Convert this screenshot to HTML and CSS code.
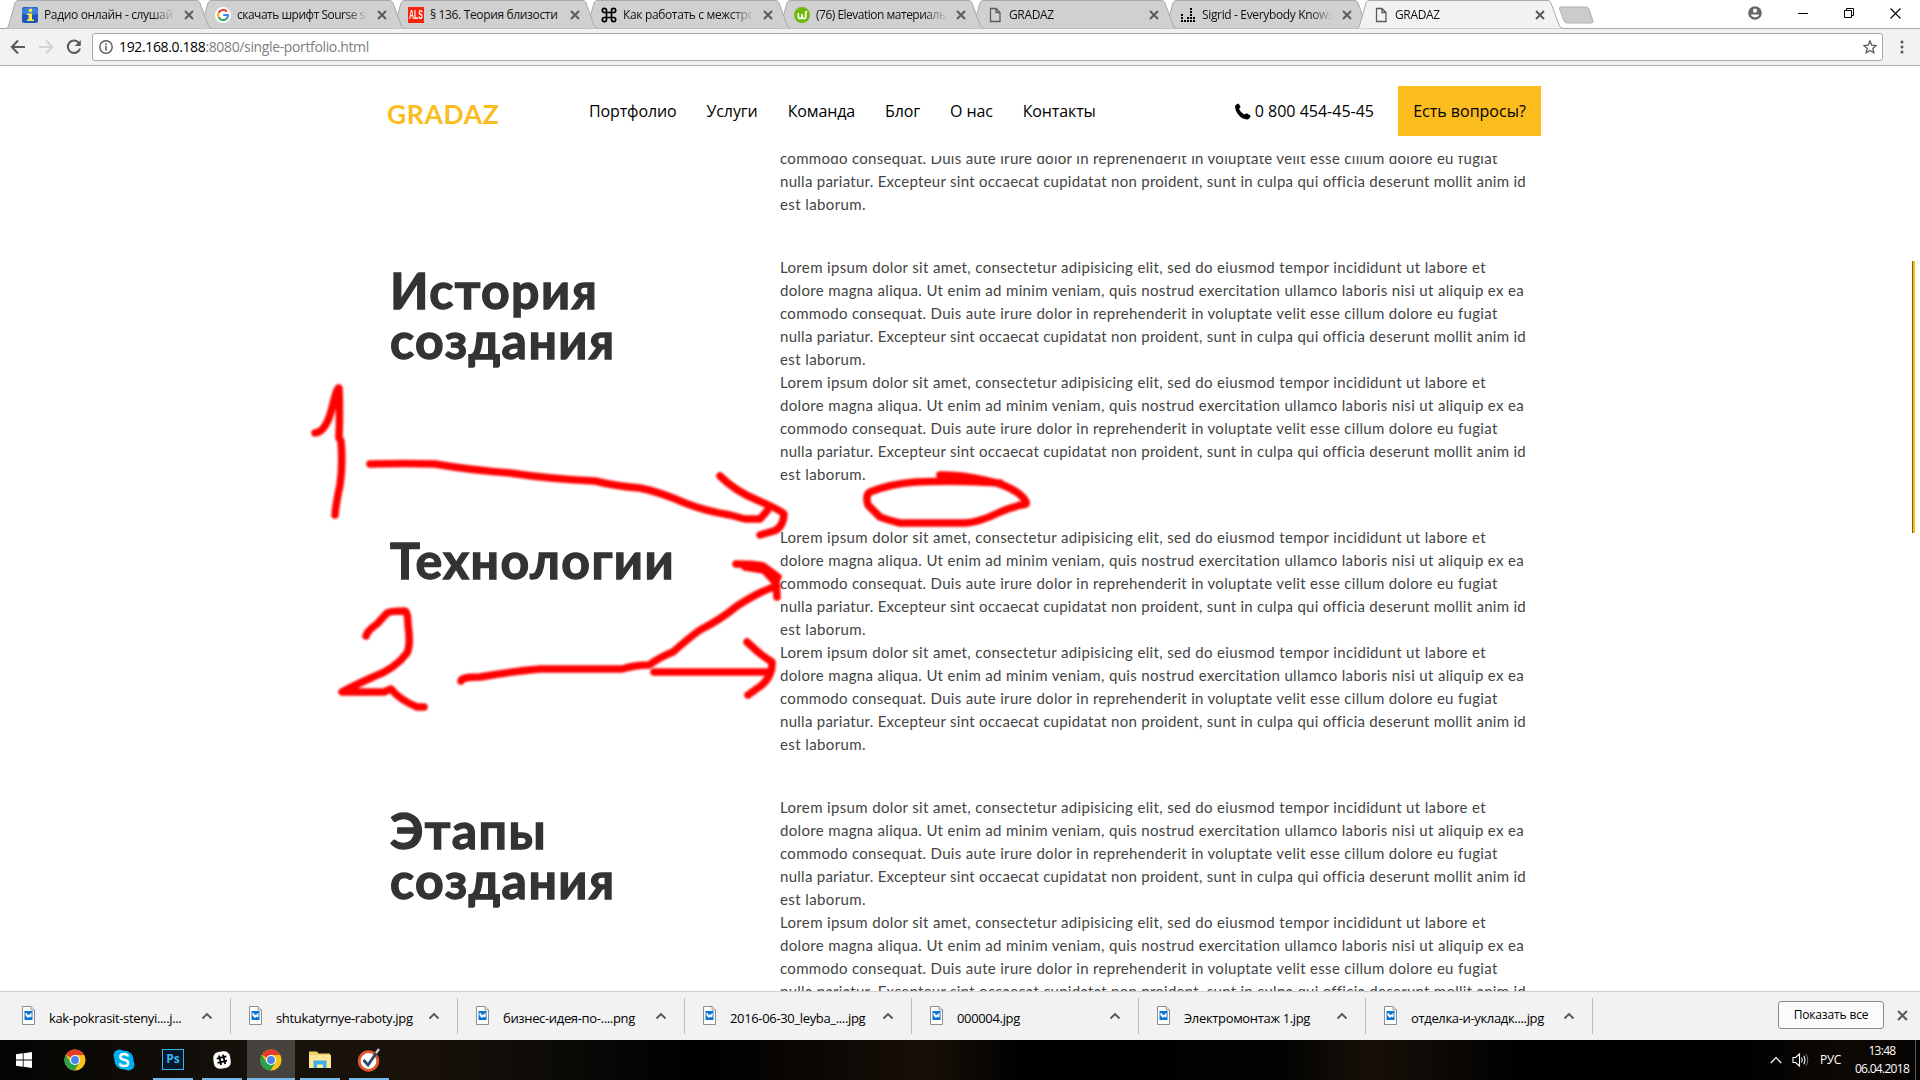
FILE: index.html
```
<!DOCTYPE html>
<html lang="ru">
<head>
<meta charset="utf-8">
<title>GRADAZ</title>
<link rel="stylesheet" href="styles.css">
</head>
<body>
<svg class="defs" width="0" height="0" aria-hidden="true">
  <symbol id="x" viewBox="0 0 10 10"><path d="M1 1l8 8M9 1l-8 8" fill="none" stroke="#5a5a5a" stroke-width="1.9"/></symbol>
  <symbol id="tab" viewBox="0 0 206 29"><path d="M0 28.5 C2 28 2 27 3 24 L9 3 Q10 .5 12 .5 H191 Q193 .5 194 3 L202 25 Q203 28 206 28.5" fill="currentColor" stroke="#a9a9a9"/></symbol>
  <symbol id="page" viewBox="0 0 16 16"><path d="M3.5 1.5h5.5l4 4v9H3.5zM9 1.5v4h4" fill="none" stroke="#5a5a5a" stroke-width="1.3"/></symbol>
  <symbol id="chev" viewBox="0 0 12 8"><path d="M1.5 6.5L6 2l4.500 4.500" fill="none" stroke="#555" stroke-width="1.9"/></symbol>
  <symbol id="file" viewBox="0 0 13 19"><path d="M.5.500h8.500l3.500 3.500v14.500H.5z" fill="#fff" stroke="#8d8d8d"/><path d="M9 .5v3.500h3.500" fill="#ddd" stroke="#8d8d8d" stroke-width=".8"/><path d="M2.500 5h8v9h-8z" fill="#0b74d1"/><path d="M3.500 7h1.200l1.300 2.500 1-1.500 1 1 .8-2h.8v3.500l-1 1-1.200-1-1.400 1.500-2.500-2.500z" fill="#fff"/></symbol>
  <symbol id="chrome" viewBox="0 0 24 24"><circle cx="12" cy="12" r="11.500" fill="#fbc116"/><path d="M12 12L2 6.200A11.500 11.500 0 0 1 22 6.500H12z" fill="#e33b2e"/><path d="M2 6.200A11.500 11.500 0 0 0 11.500 23.500L16.800 14.700 7.200 14.700z" fill="#2aa24c"/><circle cx="12" cy="12" r="5.500" fill="#fff"/><circle cx="12" cy="12" r="4.300" fill="#4a84ee"/></symbol>
</svg>

<div class="tabstrip">
  <div class="tab"><svg class="shape"><use href="#tab"/></svg>
    <svg class="fav" viewBox="0 0 16 16"><rect width="16" height="16" rx="2" fill="#1d55b8"/><path d="M0 2q8-4 16 0v5q-8 2-16 0z" fill="#3c7fd8"/><circle cx="8.500" cy="3.400" r="1.800" fill="#ffe642"/><path d="M5 6.500h5v6h2V14H5v-1.500h1.500V8H5z" fill="#ffe642"/></svg>
    <span class="label">Радио онлайн - слушай</span><svg class="close"><use href="#x"/></svg></div>
  <div class="tab"><svg class="shape"><use href="#tab"/></svg>
    <svg class="fav" viewBox="0 0 16 16"><circle cx="8" cy="8" r="8" fill="#fff"/><g fill="none" stroke-width="2.200"><path d="M11.800 4.500A5 5 0 0 0 3.700 5.700" stroke="#ea4335"/><path d="M3.700 5.700a5 5 0 0 0 0 4.600" stroke="#fbbc05"/><path d="M3.700 10.300a5 5 0 0 0 7.900 1.400" stroke="#34a853"/><path d="M11.600 11.700A5 5 0 0 0 13 8H8.200" stroke="#4285f4"/></g></svg>
    <span class="label tight">скачать шрифт Sourse s</span><svg class="close"><use href="#x"/></svg></div>
  <div class="tab"><svg class="shape"><use href="#tab"/></svg>
    <span class="fav als"><b>ALS</b></span>
    <span class="label">§ 136. Теория близости</span><svg class="close"><use href="#x"/></svg></div>
  <div class="tab"><svg class="shape"><use href="#tab"/></svg>
    <svg class="fav" viewBox="0 0 16 16"><path d="M5.500 5.500h5v5h-5zM5.500 5.500H3.400A2.100 2.100 0 1 1 5.500 3.400zM10.500 5.500V3.400a2.100 2.100 0 1 1 2.100 2.100zM10.500 10.500h2.100a2.100 2.100 0 1 1-2.100 2.100zM5.500 10.500v2.100a2.100 2.100 0 1 1-2.100-2.100z" fill="none" stroke="#000" stroke-width="1.700"/></svg>
    <span class="label">Как работать с межстро</span><svg class="close"><use href="#x"/></svg></div>
  <div class="tab"><svg class="shape"><use href="#tab"/></svg>
    <svg class="fav" viewBox="0 0 16 16"><circle cx="8" cy="8" r="8" fill="#6fb90a"/><path d="M4.300 6v3.500q0 2 1.800 2t1.900-2V7v2.500q0 2 1.800 2t1.900-2V5.500l1-1.500" fill="none" stroke="#fff" stroke-width="1.700"/></svg>
    <span class="label tight">(76) Elevation материаль</span><svg class="close"><use href="#x"/></svg></div>
  <div class="tab"><svg class="shape"><use href="#tab"/></svg>
    <svg class="fav"><use href="#page"/></svg>
    <span class="label">GRADAZ</span><svg class="close"><use href="#x"/></svg></div>
  <div class="tab"><svg class="shape"><use href="#tab"/></svg>
    <svg class="fav" viewBox="0 0 16 16"><g fill="none" stroke="#000" stroke-width="2" stroke-dasharray="2 1"><path d="M2 15V6M5 15v-3M8 15V9M11 15V1M14 15V9"/></g></svg>
    <span class="label sigrid">Sigrid - Everybody Knows</span><svg class="close"><use href="#x"/></svg></div>
  <div class="tab active"><svg class="shape"><use href="#tab"/></svg>
    <svg class="fav"><use href="#page"/></svg>
    <span class="label">GRADAZ</span><svg class="close"><use href="#x"/></svg></div>
  <svg class="newtab" viewBox="0 0 36 19"><path d="M3 1h25q2 0 3 2l4 12q.5 2-1.500 2H9q-2 0-3-2L1.500 3Q1 1 3 1z" fill="#cbcbcb" stroke="#b2b2b2"/></svg>
  <div class="winbtns">
    <svg width="14" height="14" viewBox="0 0 14 14"><circle cx="7" cy="7" r="6.800" fill="#666"/><circle cx="7" cy="4.700" r="2.100" fill="#fff"/><path d="M3 8.600h8q-.5 2.600-4 2.800-3.500-.2-4-2.800z" fill="#fff"/></svg>
    <svg width="10" height="10" viewBox="0 0 10 10"><path d="M0 5.500h10" stroke="#000"/></svg>
    <svg width="10" height="10" viewBox="0 0 10 10"><path d="M.5 2.500h7v7h-7zM2.500 2.500v-2h7v7h-2" fill="none" stroke="#000"/></svg>
    <svg width="11" height="11" viewBox="0 0 11 11"><path d="M.5.500l10 10M10.500.500l-10 10" stroke="#000" stroke-width="1.100"/></svg>
  </div>
</div>

<div class="toolbar">
  <svg class="nav-ico" viewBox="0 0 16 16"><path d="M15 8H2M8 1.500L1.800 8 8 14.500" fill="none" stroke="#5a5a5a" stroke-width="2"/></svg>
  <svg class="nav-ico" viewBox="0 0 16 16"><path d="M1 8h13M8 1.500L14.200 8 8 14.500" fill="none" stroke="#d3d3d3" stroke-width="2"/></svg>
  <svg class="nav-ico" viewBox="0 0 16 16"><path d="M13.200 4.300A6.200 6.200 0 1 0 14 9.500" fill="none" stroke="#5a5a5a" stroke-width="2"/><path d="M14.800 1v6h-6z" fill="#5a5a5a"/></svg>
  <div class="omnibox">
    <svg width="14" height="14" viewBox="0 0 14 14"><circle cx="7" cy="7" r="6.200" fill="none" stroke="#5a5a5a" stroke-width="1.400"/><path d="M7 6v4.500M7 3.200v1.700" stroke="#5a5a5a" stroke-width="1.600"/></svg>
    <span class="url"><span class="host">192.168.0.188</span>:8080/single-portfolio.html</span>
    <svg width="14" height="14" viewBox="0 0 14 14"><path d="M7 1l1.700 4.100 4.400.400-3.300 2.900 1 4.300L7 10.400l-3.800 2.300 1-4.300L.9 5.500l4.400-.4z" fill="none" stroke="#5a5a5a" stroke-width="1.300"/></svg>
  </div>
  <svg class="kebab" viewBox="0 0 4 14"><circle cx="2" cy="2" r="1.500" fill="#5a5a5a"/><circle cx="2" cy="7" r="1.500" fill="#5a5a5a"/><circle cx="2" cy="12" r="1.500" fill="#5a5a5a"/></svg>
</div>

<div class="viewport">
  <header class="site-header">
    <span class="logo">GRADAZ</span>
    <nav class="menu"><a>Портфолио</a><a>Услуги</a><a>Команда</a><a>Блог</a><a>О нас</a><a>Контакты</a></nav>
    <span class="phone"><svg width="16" height="17" viewBox="0 0 16 17"><path d="M3.600.400L5.600 4 4 5.900q1.500 3.300 5.200 5.600l2.400-1.200 4.100 2.500q-.6 3-3 3.600Q6.500 16.500 2.400 10.500-1.200 4.500.8 2 2 .5 3.600.400z"/></svg>0 800 454-45-45</span>
    <a class="ask">Есть вопросы?</a>
  </header>
  <main class="content">
    <section class="row tail">
      <h2></h2>
      <div class="text">
        <p class="c">commodo consequat. Duis aute irure dolor in reprehenderit in voluptate velit esse cillum dolore eu fugiat</p>
        <p class="d">nulla pariatur. Excepteur sint occaecat cupidatat non proident, sunt in culpa qui officia deserunt mollit anim id</p>
        <p class="e">est laborum.</p>
      </div>
    </section>
    <section class="row">
      <h2>История<br>создания</h2>
      <div class="text">
        <p class="a">Lorem ipsum dolor sit amet, consectetur adipisicing elit, sed do eiusmod tempor incididunt ut labore et</p>
        <p class="b">dolore magna aliqua. Ut enim ad minim veniam, quis nostrud exercitation ullamco laboris nisi ut aliquip ex ea</p>
        <p class="c">commodo consequat. Duis aute irure dolor in reprehenderit in voluptate velit esse cillum dolore eu fugiat</p>
        <p class="d">nulla pariatur. Excepteur sint occaecat cupidatat non proident, sunt in culpa qui officia deserunt mollit anim id</p>
        <p class="e">est laborum.</p>
        <p class="a">Lorem ipsum dolor sit amet, consectetur adipisicing elit, sed do eiusmod tempor incididunt ut labore et</p>
        <p class="b">dolore magna aliqua. Ut enim ad minim veniam, quis nostrud exercitation ullamco laboris nisi ut aliquip ex ea</p>
        <p class="c">commodo consequat. Duis aute irure dolor in reprehenderit in voluptate velit esse cillum dolore eu fugiat</p>
        <p class="d">nulla pariatur. Excepteur sint occaecat cupidatat non proident, sunt in culpa qui officia deserunt mollit anim id</p>
        <p class="e">est laborum.</p>
      </div>
    </section>
    <section class="row">
      <h2>Технологии</h2>
      <div class="text">
        <p class="a">Lorem ipsum dolor sit amet, consectetur adipisicing elit, sed do eiusmod tempor incididunt ut labore et</p>
        <p class="b">dolore magna aliqua. Ut enim ad minim veniam, quis nostrud exercitation ullamco laboris nisi ut aliquip ex ea</p>
        <p class="c">commodo consequat. Duis aute irure dolor in reprehenderit in voluptate velit esse cillum dolore eu fugiat</p>
        <p class="d">nulla pariatur. Excepteur sint occaecat cupidatat non proident, sunt in culpa qui officia deserunt mollit anim id</p>
        <p class="e">est laborum.</p>
        <p class="a">Lorem ipsum dolor sit amet, consectetur adipisicing elit, sed do eiusmod tempor incididunt ut labore et</p>
        <p class="b">dolore magna aliqua. Ut enim ad minim veniam, quis nostrud exercitation ullamco laboris nisi ut aliquip ex ea</p>
        <p class="c">commodo consequat. Duis aute irure dolor in reprehenderit in voluptate velit esse cillum dolore eu fugiat</p>
        <p class="d">nulla pariatur. Excepteur sint occaecat cupidatat non proident, sunt in culpa qui officia deserunt mollit anim id</p>
        <p class="e">est laborum.</p>
      </div>
    </section>
    <section class="row">
      <h2>Этапы<br>создания</h2>
      <div class="text">
        <p class="a">Lorem ipsum dolor sit amet, consectetur adipisicing elit, sed do eiusmod tempor incididunt ut labore et</p>
        <p class="b">dolore magna aliqua. Ut enim ad minim veniam, quis nostrud exercitation ullamco laboris nisi ut aliquip ex ea</p>
        <p class="c">commodo consequat. Duis aute irure dolor in reprehenderit in voluptate velit esse cillum dolore eu fugiat</p>
        <p class="d">nulla pariatur. Excepteur sint occaecat cupidatat non proident, sunt in culpa qui officia deserunt mollit anim id</p>
        <p class="e">est laborum.</p>
        <p class="a">Lorem ipsum dolor sit amet, consectetur adipisicing elit, sed do eiusmod tempor incididunt ut labore et</p>
        <p class="b">dolore magna aliqua. Ut enim ad minim veniam, quis nostrud exercitation ullamco laboris nisi ut aliquip ex ea</p>
        <p class="c">commodo consequat. Duis aute irure dolor in reprehenderit in voluptate velit esse cillum dolore eu fugiat</p>
        <p class="d">nulla pariatur. Excepteur sint occaecat cupidatat non proident, sunt in culpa qui officia deserunt mollit anim id</p>
      </div>
    </section>
  </main>
  <div class="scroll-thumb"></div>
</div>

<div class="downloads">
  <div class="dl"><svg class="file"><use href="#file"/></svg><span>kak-pokrasit-stenyi....j...</span><svg class="chev"><use href="#chev"/></svg></div>
  <div class="dl"><svg class="file"><use href="#file"/></svg><span>shtukatyrnye-raboty.jpg</span><svg class="chev"><use href="#chev"/></svg></div>
  <div class="dl"><svg class="file"><use href="#file"/></svg><span>бизнес-идея-по-....png</span><svg class="chev"><use href="#chev"/></svg></div>
  <div class="dl"><svg class="file"><use href="#file"/></svg><span>2016-06-30_leyba_....jpg</span><svg class="chev"><use href="#chev"/></svg></div>
  <div class="dl"><svg class="file"><use href="#file"/></svg><span>000004.jpg</span><svg class="chev"><use href="#chev"/></svg></div>
  <div class="dl"><svg class="file"><use href="#file"/></svg><span>Электромонтаж 1.jpg</span><svg class="chev"><use href="#chev"/></svg></div>
  <div class="dl"><svg class="file"><use href="#file"/></svg><span>отделка-и-укладк....jpg</span><svg class="chev"><use href="#chev"/></svg></div>
  <button class="show-all">Показать все</button>
  <svg class="dl-close"><use href="#x"/></svg>
</div>

<div class="taskbar">
  <div class="slot start"><svg width="16" height="16" viewBox="0 0 16 16"><path d="M0 2.300l6.800-1v6.300H0zM7.600 1.200L16 0v7.600H7.600zM0 8.400h6.800v6.300l-6.800-1zM7.600 8.400H16V16l-8.400-1.200z" fill="#fff"/></svg></div>
  <div class="slot"><svg width="22" height="22"><use href="#chrome"/></svg></div>
  <div class="slot"><svg width="22" height="22" viewBox="0 0 22 22"><circle cx="11" cy="11" r="9.600" fill="#00aff0"/><circle cx="6.500" cy="6.500" r="6" fill="#00aff0"/><circle cx="15.500" cy="15.500" r="6" fill="#00aff0"/><path d="M15 7.500Q14.300 5 11 5 7.300 5 7.300 7.700q0 2.300 3.700 3 4.200.800 4.200 3.300 0 3-4.200 3-3.500 0-4.300-2.700" fill="none" stroke="#fff" stroke-width="2.400"/></svg></div>
  <div class="slot open"><span class="ps">Ps</span></div>
  <div class="slot open"><svg width="20" height="20" viewBox="0 0 20 20"><rect x="1.500" y="1.500" width="17" height="17" rx="6" fill="#fff" transform="rotate(-8 10 10)"/><path d="M7 5.500l2.200 9.500M11 4.600l2.200 9.500M4.800 8.600l9.500-2.200M5.600 12.800l9.500-2.200" stroke="#000" stroke-width="1.800"/></svg></div>
  <div class="slot open current"><svg width="22" height="22"><use href="#chrome"/></svg></div>
  <div class="slot open"><svg width="22" height="20" viewBox="0 0 22 20"><path d="M0 1.500h8l1.500 2H21V17H0z" fill="#f5cf62"/><path d="M0 5h22v13H0z" fill="#fde795"/><path d="M4.500 18v-7.500h13V18h-3.500v-3.500h-6V18z" fill="#3bb0e8"/></svg></div>
  <div class="slot open"><svg width="24" height="24" viewBox="0 0 24 24"><circle cx="11.500" cy="13" r="9.300" fill="#fff" stroke="#e4572b" stroke-width="2.800"/><path d="M6.500 12l4.500 5L20 4" fill="none" stroke="#28476b" stroke-width="2.800"/><path d="M19 5l3-4" stroke="#c8d4e0" stroke-width="2.200"/></svg></div>
  <div class="tray">
    <svg width="12" height="8" viewBox="0 0 12 8"><path d="M.8 7L6 1.500 11.200 7" fill="none" stroke="#fff" stroke-width="1.200"/></svg>
    <svg width="17" height="16" viewBox="0 0 17 16"><path d="M1 5.500h2.500L7.500 2v12l-4-3.500H1z" fill="none" stroke="#fff" stroke-width="1.100"/><path d="M9.500 5.500q1.500 2.500 0 5M11.700 3.800q2.500 4.200 0 8.400" fill="none" stroke="#fff" stroke-width="1.100"/><path d="M14 2.200q3.500 5.800 0 11.600" fill="none" stroke="#777"/></svg>
    <span class="lang">РУС</span>
    <span class="clock">13:48<br>06.04.2018</span>
    <i class="peek"></i>
  </div>
</div>

<svg class="ink" viewBox="0 0 1920 1080" aria-hidden="true">
  <path d="M315 433 Q326 432 332 408 Q337 387 339 388 Q340 410 339 438 L341 441 Q343 465 340 485 Q336 503 335 515"/>
  <path d="M370 464 Q405 463 435 464 Q470 470 510 473 Q550 479 595 481 Q615 486 640 488 Q660 492 685 503 Q705 511 730 515 L745 519 H760 L767 511"/>
  <path d="M720 476 Q735 491 757 500 Q782 511 784 514 Q783 530 770 532 L760 535"/>
  <path d="M366 636 Q367 631 377 624 L387 613 Q390 611 405 611 Q408 612 408 625 Q411 645 407 653 Q395 669 373 677 Q355 685 342 692 H384 L391 689 Q400 700 417 707 H424"/>
  <path d="M461 681 Q461 677 480 677 Q515 671 540 669 Q590 669 622 669 Q635 665 649 665 Q660 657 673 652 Q690 637 700 630 Q720 620 737 606 Q760 591 777 586"/>
  <path d="M736 564 Q755 564 763 566 L778 577 L776 580 L777 597"/>
  <path d="M745 567 L764 570 L775 582"/>
  <path d="M654 672 H768 M747 642 Q759 654 772 662 Q773 675 762 685 L748 695"/>
  <path d="M940 475 Q960 474 988 481 Q1005 484 1018 493 Q1028 501 1026 504 Q1010 507 998 513 Q980 522 965 523 H900 Q888 520 880 517 L868 505 Q865 495 870 492 Q890 484 915 482 Q960 480 1000 483"/>
</svg>
</body>
</html>
```
FILE: styles.css
```
* { box-sizing: border-box; }
html, body { margin: 0; height: 100%; overflow: hidden; }
body {
  display: flex;
  flex-direction: column;
  position: relative;
  height: 1080px;
  background: #fff;
  color: #000;
  font: 12px/16px "Open Sans", "Noto Sans", sans-serif;
}
svg { display: block; flex: none; }
.defs { position: absolute; }

.tabstrip {
  display: flex;
  height: 28px;
  flex: none;
  padding-left: 6px;
  background: #fff;
}
.tab {
  position: relative;
  display: flex;
  align-items: center;
  flex: none;
  width: 206px;
  height: 29px;
  margin-right: -13px;
  padding: 1px 18px 0 16px;
  color: #d0d0d0;
}
.tab:nth-child(1) { z-index: 8; }
.tab:nth-child(2) { z-index: 7; }
.tab:nth-child(3) { z-index: 6; }
.tab:nth-child(4) { z-index: 5; }
.tab:nth-child(5) { z-index: 4; }
.tab:nth-child(6) { z-index: 3; }
.tab:nth-child(7) { z-index: 2; }
.tab.active { z-index: 10; color: #f2f2f2; }
.shape { position: absolute; left: 0; top: 0; width: 206px; height: 29px; }
.fav { position: relative; width: 16px; height: 16px; }
.als {
  display: flex;
  justify-content: center;
  background: #f9230c;
  color: #fff;
}
.als b { font: 700 12px/16px "Liberation Sans", sans-serif; transform: scaleX(.58); }
.label {
  position: relative;
  width: 130px;
  margin: 0 5px 0 6px;
  white-space: nowrap;
  letter-spacing: -.35px;
  color: #111;
  -webkit-mask-image: linear-gradient(90deg, #000 108px, transparent 131px);
  mask-image: linear-gradient(90deg, #000 108px, transparent 131px);
}
.label.tight { letter-spacing: -.5px; }
.label.sigrid { letter-spacing: -.35px; }
.tab:nth-child(3) .label { -webkit-mask-image: none; mask-image: none; }
.close { position: relative; width: 10px; height: 10px; margin-left: 5px; }
.newtab { width: 36px; height: 19px; margin: 6px 0 0 8px; }
.winbtns {
  display: flex;
  align-items: center;
  margin-left: auto;
  padding-right: 19px;
  height: 26px;
}
.winbtns svg + svg { margin-left: 36px; }

.toolbar {
  display: flex;
  align-items: center;
  flex: none;
  height: 38px;
  padding: 0 16px 0 10px;
  background: #f2f2f2;
  border-top: 1px solid #a9a9a9;
  border-bottom: 1px solid #b5b5b5;
}
.nav-ico { width: 16px; height: 16px; margin-right: 12px; }
.omnibox {
  display: flex;
  align-items: center;
  flex: 1;
  height: 28px;
  margin: 0 17px 0 -2px;
  padding: 0 5px 0 6px;
  background: #fff;
  border: 1px solid #a9a9a9;
  border-radius: 3px;
}
.url { flex: 1; margin-left: 6px; font-size: 14px; letter-spacing: -.36px; color: #808080; }
.host { color: #000; }
.kebab { width: 4px; height: 14px; }

.viewport {
  position: relative;
  display: flex;
  flex-direction: column;
  flex: none;
  height: 925px;
  overflow: hidden;
  font-family: Lato, sans-serif;
}
.site-header {
  display: flex;
  align-items: center;
  flex: none;
  height: 90px;
  padding: 0 379px 0 387px;
}
.logo {
  width: 202px;
  padding-top: 6px;
  font-size: 26.500px;
  line-height: 32px;
  font-weight: 700;
  letter-spacing: .6px;
  color: #fbbe1e;
}
.menu {
  display: flex;
  gap: 30px;
  font: 16px/22px "Open Sans", sans-serif;
  letter-spacing: -.12px;
}
.phone {
  display: flex;
  align-items: center;
  gap: 4px;
  margin-left: auto;
  font: 16px/22px "Open Sans", sans-serif;
}
.ask {
  width: 143px;
  height: 50px;
  margin-left: 24px;
  background: #fbbe1e;
  text-align: center;
  font: 500 16px/50px "Open Sans", sans-serif;
}
.content { display: flex; flex-direction: column; gap: 40px; flex: 1; overflow: hidden; }
.row { display: grid; grid-template-columns: 390px 760px; padding-left: 390px; flex: none; }
.row.tail { margin-top: -9px; }
h2 {
  margin: 9px 0 0;
  font-size: 50px;
  line-height: 50px;
  font-weight: 700;
  letter-spacing: 1.400px;
  color: #333;
  -webkit-text-stroke: 1.300px #333;
}
.text p { margin: 0; font-size: 15px; line-height: 23px; white-space: nowrap; color: #444; }
.text .a { letter-spacing: .350px; }
.text .b { letter-spacing: .338px; }
.text .c { letter-spacing: .312px; }
.text .d { letter-spacing: .268px; }
.text .e { letter-spacing: .400px; }
.scroll-thumb {
  position: absolute;
  right: 5px;
  top: 195px;
  width: 3px;
  height: 272px;
  background: #fbbe1e;
  border-left: 1px solid #7d6215;
}

.downloads {
  display: flex;
  align-items: center;
  flex: none;
  height: 49px;
  padding-left: 4px;
  background: #f2f2f2;
  border-top: 1px solid #cfcfcf;
}
.dl {
  display: flex;
  align-items: center;
  flex: none;
  width: 227px;
  height: 36px;
  padding: 0 17px 0 18px;
  border-right: 1px solid #bdbdbd;
  font-size: 13px;
  letter-spacing: -.34px;
}
.dl span { flex: 1; margin: 4px 0 0 14px; white-space: nowrap; }
.file { width: 13px; height: 19px; margin-bottom: 2px; }
.chev { width: 12px; height: 8px; }
.show-all {
  width: 106px;
  height: 28px;
  margin: 0 0 2px auto;
  padding: 0;
  background: #fbfbfb;
  border: 1px solid #8a8a8a;
  border-radius: 3px;
  font: 12px/16px "Open Sans", sans-serif;
  letter-spacing: -.15px;
}
.dl-close { width: 11px; height: 11px; margin: 0 12px 2px 13px; }

.taskbar {
  display: flex;
  gap: 1px;
  flex: none;
  height: 40px;
  background: linear-gradient(90deg, #050403 0, #14100a 220px, #1a130a 400px, #0c0a07 560px, #000 700px, #0c0804 830px, #191007 925px, #000 1020px, #020201 1280px, #171008 1370px, #000 1520px, #000 1740px, #0e0905 1850px, #050302);
}
.slot {
  display: flex;
  align-items: center;
  justify-content: center;
  width: 48px;
  height: 40px;
  flex: none;
}
.slot.start { margin-right: 2px; }
.slot.open { background: linear-gradient(#76b9ed, #76b9ed) center bottom / 40px 2px no-repeat; }
.slot.current { background: linear-gradient(#76b9ed, #76b9ed) center bottom / 48px 2px no-repeat #46423d; }
.ps {
  width: 22px;
  height: 21px;
  margin-bottom: 2px;
  background: #071727;
  border: 1px solid #34b7f1;
  color: #34b7f1;
  text-align: center;
  font: 700 12px/18px "Open Sans", sans-serif;
}
.tray { display: flex; align-items: center; margin-left: auto; color: #fff; }
.tray svg + svg { margin-left: 10px; }
.lang { width: 22px; margin-left: 11px; letter-spacing: -.500px; }
.clock { width: 56px; margin: 0 5px 0 12px; text-align: center; line-height: 18px; letter-spacing: -.700px; }
.peek { width: 5px; height: 40px; border-left: 1px solid #5a5856; }

.ink {
  position: absolute;
  left: 0;
  top: 0;
  z-index: 20;
  width: 1920px;
  height: 1080px;
  fill: none;
  stroke: #f00;
  stroke-width: 7.500;
  stroke-linecap: round;
  stroke-linejoin: round;
  filter: blur(.8px);
  pointer-events: none;
}
```
